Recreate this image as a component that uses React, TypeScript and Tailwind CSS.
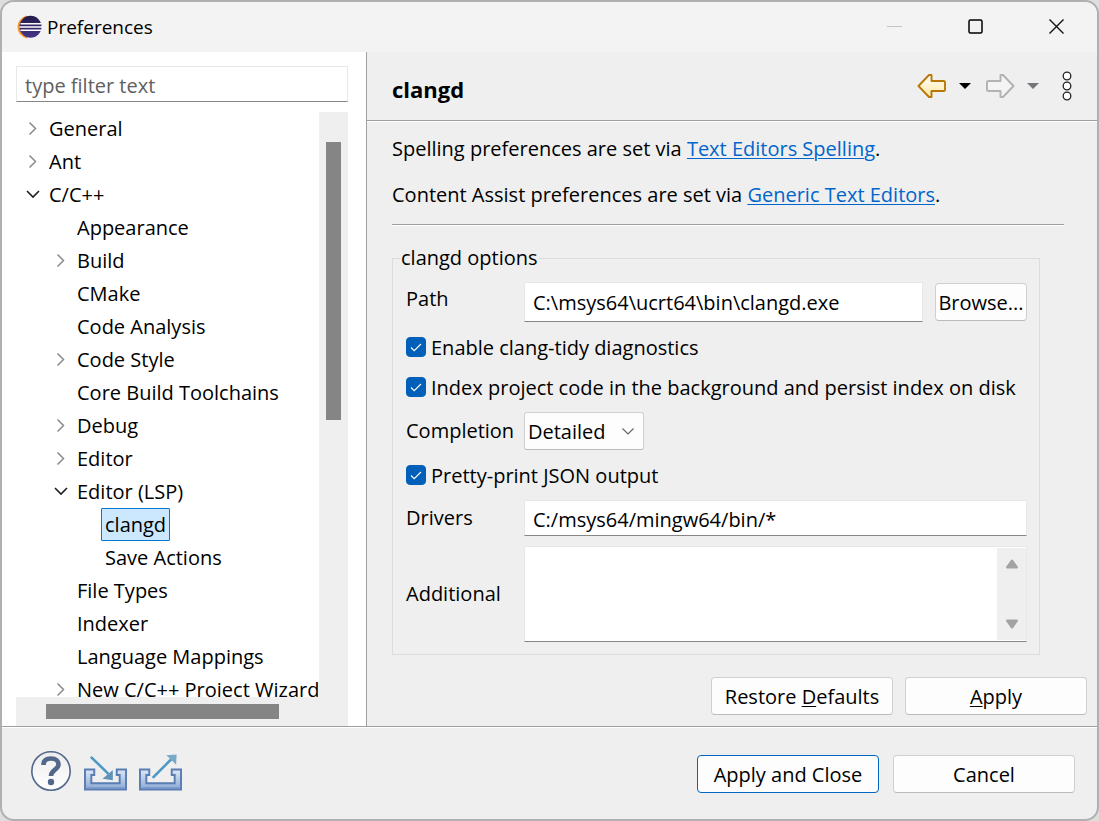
import type { ReactNode } from "react";

type Node = { label: string; level: 0 | 1 | 2; state?: "open" | "closed"; selected?: boolean };

const nodes: Node[] = [
  { label: "General", level: 0, state: "closed" },
  { label: "Ant", level: 0, state: "closed" },
  { label: "C/C++", level: 0, state: "open" },
  { label: "Appearance", level: 1 },
  { label: "Build", level: 1, state: "closed" },
  { label: "CMake", level: 1 },
  { label: "Code Analysis", level: 1 },
  { label: "Code Style", level: 1, state: "closed" },
  { label: "Core Build Toolchains", level: 1 },
  { label: "Debug", level: 1, state: "closed" },
  { label: "Editor", level: 1, state: "closed" },
  { label: "Editor (LSP)", level: 1, state: "open" },
  { label: "clangd", level: 2, selected: true },
  { label: "Save Actions", level: 2 },
  { label: "File Types", level: 1 },
  { label: "Indexer", level: 1 },
  { label: "Language Mappings", level: 1 },
  { label: "New C/C++ Project Wizard", level: 1, state: "closed" },
];

const indent = { 0: "pl-2", 1: "pl-9", 2: "pl-16" };

function EclipseLogo() {
  return (
    <svg width="26" height="26" viewBox="0 0 26 26" aria-hidden="true">
      <defs>
        <linearGradient id="orb" x1="0" y1="0" x2="0" y2="1">
          <stop offset="0" stopColor="#241a4a" />
          <stop offset="1" stopColor="#473788" />
        </linearGradient>
      </defs>
      <path d="M10 2C4.500 3.400 1 7.500 1 13s3.500 9.600 9 11C6 21 4 17.500 4 13s2-8 6-11Z" fill="#f7941e" stroke="#f7941e" strokeWidth="0.800" />
      <circle cx="13.500" cy="12.800" r="11" fill="url(#orb)" />
      <path d="M3.500 9.800h20.500M2.500 13h22.500M3.500 16.200h20.500" stroke="#fff" strokeWidth="1.500" />
    </svg>
  );
}

function Chevron({ open }: { open: boolean }) {
  return (
    <svg width="18" height="18" viewBox="0 0 18 18" fill="none" aria-hidden="true">
      {open ? (
        <path d="M3 5l6 6 6-6" stroke="#1f1f1f" strokeWidth="1.600" />
      ) : (
        <path d="M5.500 2.500l6 6-6 6" stroke="#8b8b8b" strokeWidth="1.500" />
      )}
    </svg>
  );
}

function Tree() {
  return (
    <ul className="min-h-0 min-w-0 flex-1 overflow-hidden bg-white">
      {nodes.map((n) => (
        <li key={n.label} className={`flex h-[33px] items-center ${indent[n.level]}`}>
          {n.level < 2 && (
            <span className="flex w-[25px] shrink-0">
              {n.state && (
                <button type="button" aria-label={`Toggle ${n.label}`}>
                  <Chevron open={n.state === "open"} />
                </button>
              )}
            </span>
          )}
          {n.level === 2 ? (
            <span
              className={`ml-[21px] flex h-full items-center rounded-[1px] border px-[3px] pt-px ${
                n.selected ? "border-[#0078d4] bg-[#cce8ff]" : "border-transparent"
              }`}
            >
              {n.label}
            </span>
          ) : (
            <span className="whitespace-nowrap pt-px">{n.label}</span>
          )}
        </li>
      ))}
    </ul>
  );
}

function Check({ children, checked = true }: { children: ReactNode; checked?: boolean }) {
  return (
    <label className="flex h-10 items-center gap-[5px] whitespace-nowrap">
      <span className="grid size-5 place-items-center">
        <input
          type="checkbox"
          defaultChecked={checked}
          className="peer col-start-1 row-start-1 size-5 appearance-none rounded-[4px] border border-[#808080] bg-white checked:border-[#005fb8] checked:bg-[#005fb8]"
        />
        <svg className="pointer-events-none col-start-1 row-start-1 opacity-0 peer-checked:opacity-100" width="20" height="20" viewBox="0 0 20 20" fill="none" aria-hidden="true">
          <path d="M5 10.500l3.200 3.200L15 7" stroke="#fff" strokeWidth="1.100" />
        </svg>
      </span>
      <span className="pt-0.5">{children}</span>
    </label>
  );
}

function Button({ children, primary = false }: { children: ReactNode; primary?: boolean }) {
  return (
    <button
      type="button"
      className={`h-[38px] w-[182px] rounded-[4px] border bg-[#fdfdfd] pt-0.5 ${
        primary ? "border-[#0067c0]" : "border-[#d0d0d0] border-b-[#bbbbbb]"
      }`}
    >
      {children}
    </button>
  );
}

function TrayBase() {
  return (
    <>
      <path d="M1 15.500H10.500V21H7.500V29.500H36.500V21H33.500V15.500H43V36H1Z" fill="url(#tray)" />
      <path
        d="M1 15.500H10.500V21H7.500V29.500H36.500V21H33.500V15.500H43V36H1Z"
        fill="none"
        stroke="#5a7db3"
        strokeWidth="2"
      />
      <path d="M3 34H41" stroke="#7b98c8" strokeWidth="1" />
    </>
  );
}

const field = "border border-[#e8e8e8] border-b-[#868686] bg-white px-2 outline-none";

export default function App() {
  return (
    <div className="flex h-screen min-h-[600px] flex-col bg-[#dedede] font-['Open_Sans','Noto_Sans',sans-serif] text-[20px] leading-[26px] text-black">
      <div className="flex min-h-0 flex-1 flex-col overflow-hidden rounded-[14px] border-2 border-[#b0b0b0] bg-[#efefef]">
        <header className="flex h-[50px] shrink-0 items-center bg-[#f3f3f3] pl-[15px]">
          <EclipseLogo />
          <h1 className="ml-1 text-[19px]">Preferences</h1>
          <div className="ml-auto flex h-full">
            <button type="button" aria-label="Minimize" className="grid w-[81px] place-items-center">
              <svg width="16" height="16" viewBox="0 0 16 16"><path d="M0 7.500h15" stroke="#c4c4c4" /></svg>
            </button>
            <button type="button" aria-label="Maximize" className="grid w-[81px] place-items-center">
              <svg width="16" height="16" viewBox="0 0 16 16" fill="none"><rect x="1" y="1" width="13" height="13" rx="1.500" stroke="#000" strokeWidth="1.500" /></svg>
            </button>
            <button type="button" aria-label="Close" className="grid w-[81px] place-items-center">
              <svg width="16" height="16" viewBox="0 0 16 16"><path d="M.5.5l14 14M14.500.5l-14 14" stroke="#111" strokeWidth="1.400" /></svg>
            </button>
          </div>
        </header>

        <div className="flex min-h-0 flex-1 border-b border-[#a0a0a0]">
          <aside className="flex w-[365px] shrink-0 flex-col border-r border-[#a0a0a0] bg-white pl-3.5 pr-[18px] pt-3.5">
            <input
              type="text"
              aria-label="Filter"
              placeholder="type filter text"
              className={`h-9 w-full shrink-0 pt-0.5 placeholder:text-[#606060] placeholder:opacity-100 ${field}`}
            />
            <div className="mt-2.5 flex min-h-0 flex-1">
              <Tree />
              <div className="flex w-[29px] flex-col bg-[#efefef] px-[7px] pt-[30px]">
                <div className="h-[278px] bg-[#858585]" />
              </div>
            </div>
            <div className="h-[29px] shrink-0 bg-[#efefef] py-[7px] pl-[30px]">
              <div className="h-[15px] w-[233px] bg-[#858585]" />
            </div>
          </aside>

          <main className="flex min-w-0 flex-1 flex-col">
            <div className="flex h-[69px] shrink-0 items-center border-b border-[#a0a0a0] pl-[25px] pr-6 shadow-[0_1px_0_#fff]">
              <h2 className="pt-1.5 text-[22px] font-bold">clangd</h2>
              <div className="ml-auto flex items-center">
                <button type="button" aria-label="Back">
                  <svg width="30" height="26" viewBox="0 0 30 26">
                    <defs>
                      <linearGradient id="gold" x1="0" y1="0" x2="0" y2="1">
                        <stop offset="0" stopColor="#fff" />
                        <stop offset="1" stopColor="#ffe7a0" />
                      </linearGradient>
                    </defs>
                    <path d="M1.500 13L12 2h2.500v6h12q1.500 0 1.500 1v8q0 1-1.500 1H14.500v6H12Z" fill="url(#gold)" stroke="#b87808" strokeWidth="1.900" strokeLinejoin="round" />
                  </svg>
                </button>
                <button type="button" aria-label="Back history" className="ml-3">
                  <svg width="12" height="6" viewBox="0 0 12 6"><path d="M0 0h12L6 6Z" fill="#000" /></svg>
                </button>
                <button type="button" aria-label="Forward" className="ml-3.5">
                  <svg width="30" height="26" viewBox="0 0 30 26">
                    <path d="M28.500 13L18 2h-2.500v6h-12Q2 8 2 9v8q0 1 1.500 1h12v6H18Z" fill="#f4f4f4" stroke="#b2b2b2" strokeWidth="1.900" strokeLinejoin="round" />
                  </svg>
                </button>
                <button type="button" aria-label="Forward history" className="ml-3">
                  <svg width="12" height="6" viewBox="0 0 12 6"><path d="M0 0h12L6 6Z" fill="#75757a" /></svg>
                </button>
                <button type="button" aria-label="Menu" className="ml-[22px]">
                  <svg width="12" height="30" viewBox="0 0 12 30" fill="#fff" stroke="#222" strokeWidth="1.300">
                    <circle cx="6" cy="5" r="3.800" /><circle cx="6" cy="15" r="3.800" /><circle cx="6" cy="25" r="3.800" />
                  </svg>
                </button>
              </div>
            </div>

            <div className="flex flex-1 flex-col pl-[25px]">
              <div className="mr-[33px] border-b border-[#a0a0a0] pb-4 pt-[15px] shadow-[0_1px_0_#fff]">
                <p>
                  Spelling preferences are set via{" "}
                  <a href="#spelling" className="text-[#0066cc] underline decoration-1 underline-offset-2">Text Editors Spelling</a>.
                </p>
                <p className="mt-5">
                  Content Assist preferences are set via{" "}
                  <a href="#editors" className="text-[#0066cc] underline decoration-1 underline-offset-2">Generic Text Editors</a>.
                </p>
              </div>

              <fieldset className="mr-[57px] mt-5 border border-[#dcdcdc] pb-3 pl-[13px] pr-3">
                <legend className="-ml-1.5 px-px">clangd options</legend>
                <div className="mt-[11px] flex gap-3">
                  <label htmlFor="path" className="w-[106px] shrink-0 pt-1">Path</label>
                  <input id="path" type="text" defaultValue={"C:\\msys64\\ucrt64\\bin\\clangd.exe"} className={`h-10 min-w-0 flex-1 ${field}`} />
                  <button type="button" className="h-[38px] w-[92px] self-center whitespace-nowrap rounded-[4px] border border-[#d0d0d0] border-b-[#bbbbbb] bg-[#fdfdfd] pt-0.5">Browse...</button>
                </div>
                <div className="mt-[5px]">
                  <Check>Enable clang-tidy diagnostics</Check>
                  <Check>Index project code in the background and persist index on disk</Check>
                </div>
                <div className="mt-[5px] flex items-center gap-3">
                  <label htmlFor="completion" className="w-[106px] shrink-0">Completion</label>
                  <div className="relative w-[120px]">
                    <select id="completion" className="h-[38px] w-full appearance-none rounded-[3px] border border-[#d0d0d0] border-b-[#bbbbbb] bg-[#fdfdfd] pl-[3px] pt-0.5">
                      <option>Detailed</option>
                    </select>
                    <svg className="pointer-events-none absolute right-[9px] top-3" width="14" height="14" viewBox="0 0 14 14" fill="none" aria-hidden="true">
                      <path d="M1.500 4.500L7 10l5.500-5.500" stroke="#666" strokeWidth="1.200" />
                    </svg>
                  </div>
                </div>
                <div className="mt-[5px]">
                  <Check>Pretty-print JSON output</Check>
                </div>
                <div className="mt-[5px] flex items-center gap-3">
                  <label htmlFor="drivers" className="w-[106px] shrink-0">Drivers</label>
                  <input id="drivers" type="text" defaultValue="C:/msys64/mingw64/bin/*" className={`h-9 min-w-0 flex-1 pt-0.5 ${field}`} />
                </div>
                <div className="mt-2.5 flex items-center gap-3">
                  <label htmlFor="additional" className="w-[106px] shrink-0">Additional</label>
                  <div className="flex h-24 min-w-0 flex-1 border border-[#e8e8e8] border-b-[#868686] bg-white">
                    <textarea id="additional" className="min-w-0 flex-1 resize-none overflow-hidden bg-white outline-none" />
                    <div className="my-px flex w-[29px] flex-col items-center justify-between bg-[#efefef] py-[11px]">
                      <svg width="12" height="10" viewBox="0 0 12 10"><path d="M5 1q1-1 2 0l5 7q0 1.500-1 1.500H1Q0 9.500 0 8Z" fill="#a3a3a3" /></svg>
                      <svg width="12" height="10" viewBox="0 0 12 10"><path d="M5 9q1 1 2 0l5-7Q12 .5 11 .5H1Q0 .5 0 2Z" fill="#a3a3a3" /></svg>
                    </div>
                  </div>
                </div>
              </fieldset>

              <div className="mb-[11px] mr-2.5 mt-auto flex justify-end gap-3">
                <Button>Restore <u className="decoration-1 underline-offset-2">D</u>efaults</Button>
                <Button><u className="decoration-1 underline-offset-2">A</u>pply</Button>
              </div>
            </div>
          </main>
        </div>

        <footer className="flex h-[92px] shrink-0 items-center justify-between border-t border-white pl-[29px] pr-[22px]">
          <div className="flex items-center pb-1.5">
            <button type="button" aria-label="Help">
              <svg width="40" height="40" viewBox="0 0 40 40">
                <defs>
                  <linearGradient id="glass" x1="0" y1="0" x2="0" y2="1">
                    <stop offset="0" stopColor="#ececec" />
                    <stop offset="1" stopColor="#fff" />
                  </linearGradient>
                </defs>
                <circle cx="20" cy="20" r="19.200" fill="url(#glass)" stroke="#53678b" strokeWidth="1.600" />
                <path d="M12.500 14C12.500 9.500 15.500 7.500 20 7.500c5 0 7.500 2.500 7.500 6 0 5-7.500 5.500-7.500 11.500" fill="none" stroke="#53678b" strokeWidth="4.600" />
                <circle cx="20" cy="31" r="3.200" fill="#53678b" />
              </svg>
            </button>
            <button type="button" aria-label="Import" className="ml-[13px]">
              <svg width="43" height="40" viewBox="0 0 44 40">
                <defs>
                  <linearGradient id="tray" x1="0" y1="0" x2="0" y2="1">
                    <stop offset="0" stopColor="#dde8f6" />
                    <stop offset="1" stopColor="#8ba8d4" />
                  </linearGradient>
                </defs>
                <g transform="translate(0 3)">
                  <TrayBase />
                </g>
                <path d="M7 5.500L25 23" stroke="#4d97c4" strokeWidth="2.600" />
                <path d="M29.500 19v10.500l-10.500-1.500Z" fill="#5f93b8" />
              </svg>
            </button>
            <button type="button" aria-label="Export" className="ml-3">
              <svg width="43" height="40" viewBox="0 0 44 40">
                <g transform="translate(0 3)">
                  <TrayBase />
                </g>
                <path d="M14 27L33 8" stroke="#4d97c4" strokeWidth="2.600" />
                <path d="M28 4L38.500 3 38 13.500Z" fill="#7aa9c8" />
              </svg>
            </button>
          </div>
          <div className="flex gap-3.5">
            <Button primary>Apply and Close</Button>
            <Button>Cancel</Button>
          </div>
        </footer>
      </div>
    </div>
  );
}
